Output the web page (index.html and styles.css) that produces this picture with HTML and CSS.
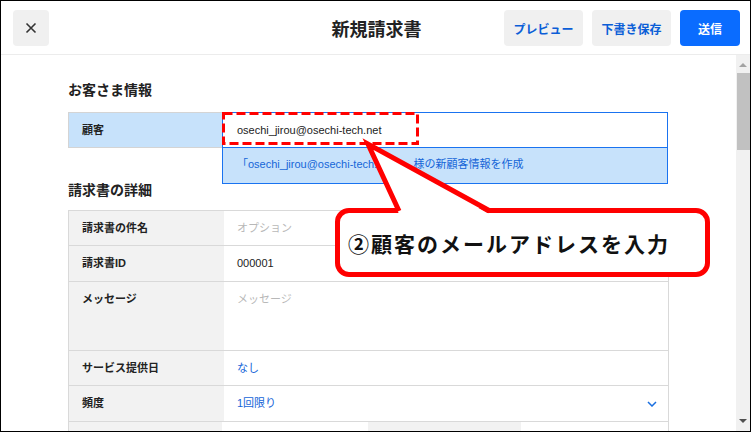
FILE: index.html
```html
<!DOCTYPE html>
<html lang="ja">
<head>
<meta charset="utf-8">
<title>新規請求書</title>
<link rel="stylesheet" href="styles.css">
</head>
<body>
<div class="frame">
  <header class="topbar">
    <div class="left">
      <button class="btn-close" aria-label="閉じる">
        <svg width="12" height="12" viewBox="0 0 12 12"><path d="M1.5 1.5L10.5 10.5M10.5 1.5L1.5 10.5" stroke="#333" stroke-width="1.6" fill="none"/></svg>
      </button>
    </div>
    <h1 class="title">新規請求書</h1>
    <div class="actions">
      <button class="btn btn-light">プレビュー</button>
      <button class="btn btn-light">下書き保存</button>
      <button class="btn btn-primary">送信</button>
    </div>
  </header>
  <div class="body">
    <main class="content">
      <h2 class="section-title first">お客さま情報</h2>
      <div class="customer-row">
        <div class="customer-label">顧客</div>
        <div class="customer-input">osechi_jirou@osechi-tech.net
          <div class="suggest">「osechi_jirou@osechi-tech.net」<span class="suggest-note">様の新顧客情報を作成</span></div>
        </div>
      </div>
      <h2 class="section-title detail">請求書の詳細</h2>
      <div class="table">
        <div class="row h34"><div class="label">請求書の件名</div><div class="value placeholder">オプション</div></div>
        <div class="row h35"><div class="label">請求書ID</div><div class="value">000001</div></div>
        <div class="row h68"><div class="label">メッセージ</div><div class="value placeholder">メッセージ</div></div>
        <div class="row h34"><div class="label">サービス提供日</div><div class="value link">なし</div></div>
        <div class="row h35"><div class="label">頻度</div><div class="value link select">1回限り
          <svg class="chev" width="10" height="6" viewBox="0 0 10 6"><path d="M1 1L5 5L9 1" stroke="#1a6fe0" stroke-width="1.5" fill="none"/></svg></div></div>
        <div class="row four"><div class="label"></div><div class="value"></div><div class="label"></div><div class="value"></div></div>
      </div>
    </main>
    <div class="scrollbar">
      <div class="arrow up"></div>
      <div class="thumb"></div>
      <div class="spacer"></div>
      <div class="arrow down"></div>
    </div>
  </div>
</div>

<div class="callout">②顧客のメールアドレスを入力</div>
<svg class="overlay" width="751" height="432" viewBox="0 0 751 432">
  <rect x="223.5" y="113.5" width="194" height="30" fill="none" stroke="#ff0000" stroke-width="3" stroke-dasharray="9 4"/>
  <polygon points="368,145 399,214 489,214" fill="#ffffff"/>
  <polyline points="399,211 368,144 490,211" fill="none" stroke="#ff0000" stroke-width="5" stroke-linejoin="miter"/>
</svg>
</body>
</html>
```

FILE: styles.css
```css
* { box-sizing: border-box; }
html, body { margin: 0; padding: 0; }
body {
  font-family: "Liberation Sans", "Noto Sans CJK JP", sans-serif;
  color: #222;
  background: #fff;
  width: 751px;
  height: 432px;
  overflow: hidden;
  position: relative;
}
.frame {
  width: 751px;
  height: 432px;
  border: 1px solid #000;
  display: flex;
  flex-direction: column;
  overflow: hidden;
}
.topbar {
  height: 54px;
  flex: none;
  border-bottom: 1px solid #ececec;
  display: grid;
  grid-template-columns: 1fr auto 1fr;
  align-items: start;
  padding: 9px 10px 0 12px;
}
.btn-close {
  width: 36px;
  height: 36px;
  border: none;
  border-radius: 4px;
  background: #f0f0f0;
  display: flex;
  align-items: center;
  justify-content: center;
  padding: 0;
}
.title {
  margin: 0;
  font-family: "Noto Sans CJK JP", sans-serif;
  font-size: 18px;
  line-height: 36px;
  font-weight: 700;
  color: #222;
}
.actions {
  display: flex;
  justify-content: flex-end;
  gap: 9px;
}
.btn {
  height: 36px;
  border: none;
  border-radius: 4px;
  font-family: "Noto Sans CJK JP", sans-serif;
  font-size: 12px;
  font-weight: 700;
  padding: 0;
}
.btn-light { width: 79px; background: #f0f0f0; color: #0b5ed7; }
.btn-primary { width: 60px; background: #0a6cff; color: #fff; }

.body {
  flex: 1;
  display: flex;
  min-height: 0;
}
.content {
  flex: 1;
  padding: 24px 0 0 67px;
  overflow: hidden;
}
.section-title {
  margin: 0;
  font-family: "Noto Sans CJK JP", sans-serif;
  font-size: 14px;
  line-height: 20px;
  font-weight: 700;
  color: #222;
}
.section-title.detail { margin-top: 31px; }
.customer-row {
  margin-top: 13px;
  width: 600px;
  display: flex;
  height: 36px;
  position: relative;
  z-index: 2;
}
.customer-label {
  width: 154px;
  background: #c7e2fb;
  border: 1px solid #d4d4d4;
  border-right: none;
  font-size: 11px;
  font-weight: 700;
  line-height: 34px;
  padding-left: 13px;
  color: #222;
}
.customer-input {
  flex: 1;
  border: 1px solid #1a73f0;
  background: #fff;
  font-size: 11px;
  line-height: 34px;
  padding-left: 14px;
  color: #222;
  position: relative;
}
.suggest {
  position: absolute;
  left: -1px;
  top: 34px;
  width: 446px;
  height: 37px;
  background: #c7e2fb;
  border: 1px solid #1a73f0;
  color: #1565d8;
  font-size: 11px;
  line-height: 33px;
  padding-left: 14px;
  white-space: nowrap;
}
.suggest-note { margin-left: 10px; }
.table {
  margin-top: 11px;
  width: 601px;
  border: 1px solid #d9d9d9;
  border-bottom: none;
}
.row {
  display: grid;
  grid-template-columns: 155px 1fr;
  border-bottom: 1px solid #d9d9d9;
  font-size: 11px;
  line-height: 20px;
}
.row.h34 { height: 35px; }
.row.h35 { height: 36px; }
.row.h68 { height: 69px; }
.row.four { grid-template-columns: 153px 146px 153px 1fr; height: 30px; border-bottom: none; }
.label {
  background: #f2f2f2;
  font-weight: 700;
  color: #222;
  padding: 7px 0 0 13px;
}
.value {
  padding: 7px 0 0 13px;
  color: #222;
  background: #fff;
}
.placeholder { color: #b8b8b8; }
.link { color: #1565d8; }
.select { position: relative; }
.chev { position: absolute; right: 11px; top: 15px; }

.scrollbar {
  width: 14px;
  flex: none;
  background: #f1f1f1;
  display: flex;
  flex-direction: column;
  align-items: center;
}
.arrow { width: 0; height: 0; border-left: 4px solid transparent; border-right: 4px solid transparent; }
.arrow.up { border-bottom: 4px solid #a3a3a3; margin-top: 8px; }
.arrow.down { border-top: 4px solid #505050; margin-bottom: 8px; }
.thumb { width: 13px; margin-left: 1px; height: 77px; margin-top: 6px; background: #c1c1c1; }
.spacer { flex: 1; }

.callout {
  position: absolute;
  left: 335px;
  top: 208px;
  width: 375px;
  height: 69px;
  border: 5px solid #ff0000;
  border-radius: 14px;
  background: #fff;
  display: flex;
  align-items: center;
  padding-left: 8px;
  font-family: "Noto Sans CJK JP", sans-serif;
  font-size: 21px;
  font-weight: 700;
  letter-spacing: 2px;
  color: #111;
  z-index: 5;
}
.overlay {
  position: absolute;
  left: 0;
  top: 0;
  z-index: 6;
  pointer-events: none;
}
```
